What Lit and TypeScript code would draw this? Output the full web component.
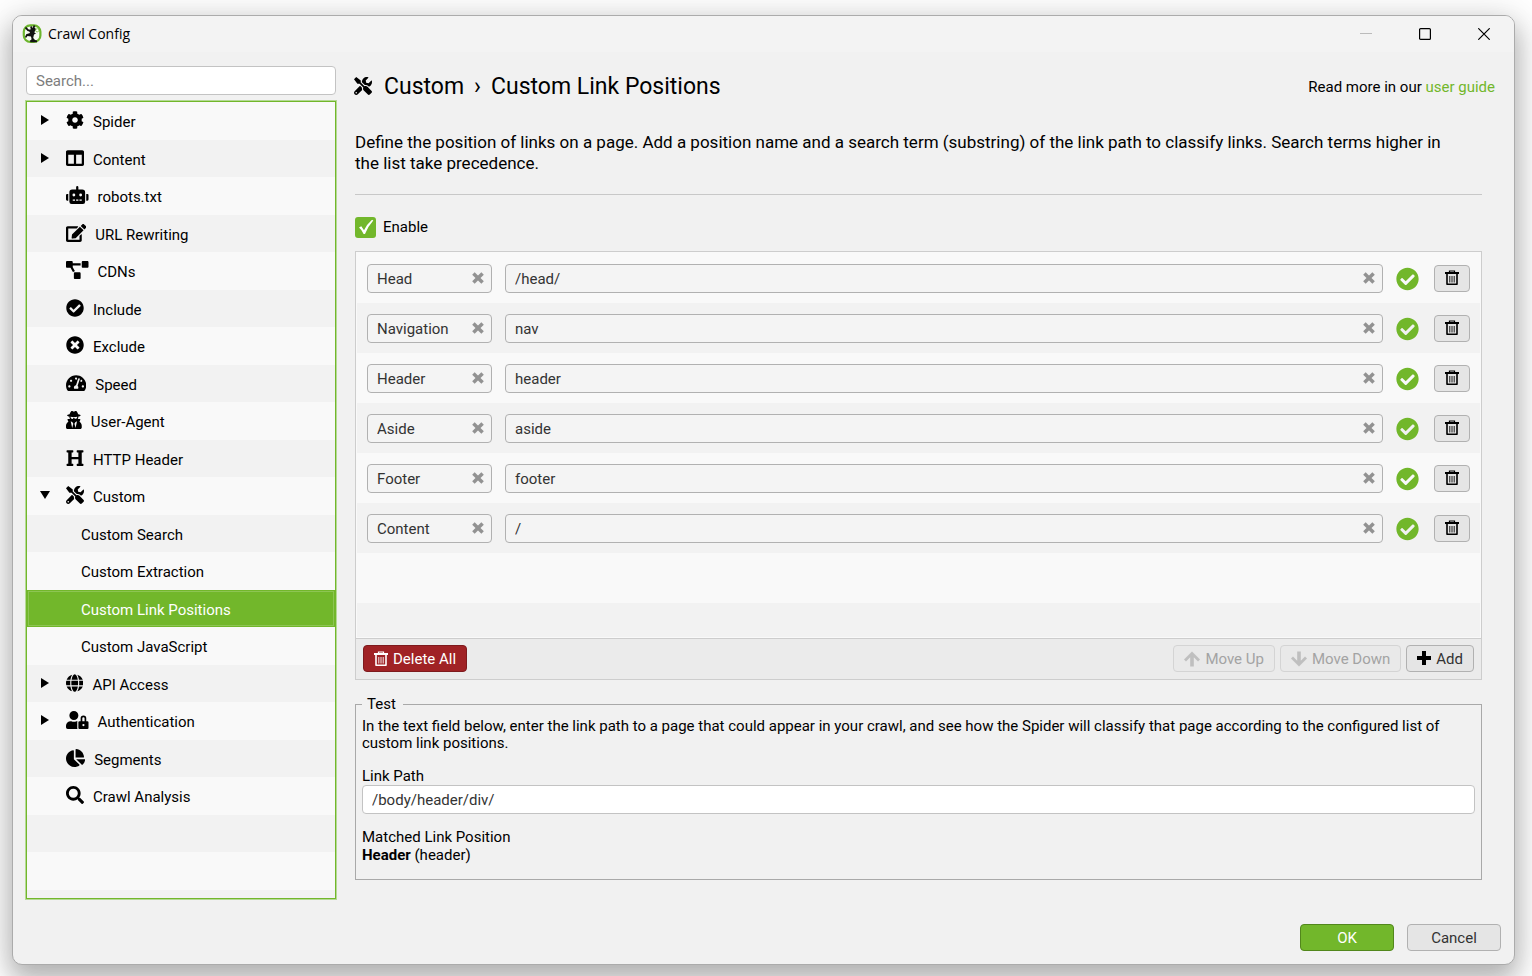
import { LitElement, html, css, svg, nothing } from "lit";
import { customElement, state } from "lit/decorators.js";
import { classMap } from "lit/directives/class-map.js";
import { live } from "lit/directives/live.js";

type Glyph = { w: number; d: string };

const GLYPHS: Record<string, Glyph> = {
  cog: { w: 512, d: "M487.4 315.7l-42.6-24.6c4.3-23.2 4.3-47 0-70.2l42.6-24.6c4.9-2.8 7.1-8.6 5.5-14-11.1-35.6-30-67.8-54.7-94.6-3.8-4.1-10-5.1-14.8-2.3L380.8 110c-17.9-15.4-38.5-27.3-60.8-35.1V25.8c0-5.6-3.9-10.5-9.4-11.7-36.7-8.2-74.3-7.8-109.2 0-5.5 1.2-9.4 6.1-9.4 11.7V75c-22.2 7.9-42.8 19.8-60.8 35.1L88.7 85.5c-4.9-2.8-11-1.9-14.8 2.3-24.7 26.7-43.6 58.9-54.7 94.6-1.7 5.4.6 11.2 5.5 14L67.3 221c-4.3 23.2-4.3 47 0 70.2l-42.6 24.6c-4.9 2.8-7.1 8.6-5.5 14 11.1 35.6 30 67.8 54.7 94.6 3.8 4.1 10 5.1 14.8 2.3l42.6-24.6c17.9 15.4 38.5 27.3 60.8 35.1v49.2c0 5.6 3.9 10.5 9.4 11.7 36.7 8.2 74.3 7.8 109.2 0 5.5-1.2 9.4-6.1 9.4-11.7v-49.2c22.2-7.9 42.8-19.8 60.8-35.1l42.6 24.6c4.9 2.8 11 1.9 14.8-2.3 24.7-26.7 43.6-58.9 54.7-94.6 1.5-5.5-.7-11.3-5.6-14.1zM256 336c-44.1 0-80-35.9-80-80s35.9-80 80-80 80 35.9 80 80-35.9 80-80 80z" },
  columns: { w: 512, d: "M464 32H48C21.49 32 0 53.49 0 80v352c0 26.51 21.49 48 48 48h416c26.51 0 48-21.49 48-48V80c0-26.51-21.49-48-48-48zM224 416H64V160h160v256zm224 0H288V160h160v256z" },
  robot: { w: 640, d: "M32,224H64V416H32A31.96166,31.96166,0,0,1,0,384V256A31.96166,31.96166,0,0,1,32,224Zm512-48V448a64.06328,64.06328,0,0,1-64,64H160a64.06328,64.06328,0,0,1-64-64V176a79.974,79.974,0,0,1,80-80H288V32a32,32,0,0,1,64,0V96H464A79.974,79.974,0,0,1,544,176ZM264,256a40,40,0,1,0-40,40A39.997,39.997,0,0,0,264,256Zm-8,128H192v32h64Zm96,0H288v32h64ZM456,256a40,40,0,1,0-40,40A39.997,39.997,0,0,0,456,256Zm-8,128H384v32h64ZM640,256V384a31.96166,31.96166,0,0,1-32,32H576V224h32A31.96166,31.96166,0,0,1,640,256Z" },
  edit: { w: 576, d: "M402.6 83.2l90.2 90.2c3.8 3.8 3.8 10 0 13.8L274.4 405.6l-92.8 10.3c-12.4 1.4-22.9-9.1-21.5-21.5l10.3-92.8L388.8 83.2c3.8-3.8 10-3.8 13.8 0zm162-22.9l-48.8-48.8c-15.2-15.2-39.9-15.2-55.2 0l-35.4 35.4c-3.8 3.8-3.8 10 0 13.8l90.2 90.2c3.8 3.8 10 3.8 13.8 0l35.4-35.4c15.2-15.3 15.2-40 0-55.2zM384 346.2V448H64V128h229.8c3.2 0 6.2-1.3 8.5-3.5l40-40c7.6-7.6 2.2-20.5-8.5-20.5H48C21.5 64 0 85.5 0 112v352c0 26.5 21.5 48 48 48h352c26.5 0 48-21.5 48-48V306.2c0-10.7-12.9-16-20.5-8.5l-40 40c-2.2 2.3-3.5 5.3-3.5 8.5z" },
  diagram: { w: 640, d: "M384 320H256c-17.67 0-32 14.33-32 32v128c0 17.67 14.33 32 32 32h128c17.67 0 32-14.33 32-32V352c0-17.67-14.33-32-32-32zM192 32c0-17.67-14.33-32-32-32H32C14.33 0 0 14.33 0 32v128c0 17.67 14.33 32 32 32h95.72l73.16 128.04C211.98 300.98 232.4 288 256 288h.28L192 175.51V128h224V64H192V32zM608 0H480c-17.67 0-32 14.33-32 32v128c0 17.67 14.33 32 32 32h128c17.67 0 32-14.33 32-32V32c0-17.67-14.33-32-32-32z" },
  check: { w: 512, d: "M504 256c0 136.967-111.033 248-248 248S8 392.967 8 256 119.033 8 256 8s248 111.033 248 248zM227.314 387.314l184-184c6.248-6.248 6.248-16.379 0-22.627l-22.627-22.627c-6.248-6.249-16.379-6.249-22.628 0L216 308.118l-70.059-70.059c-6.248-6.248-16.379-6.248-22.628 0l-22.627 22.627c-6.248 6.248-6.248 16.379 0 22.627l104 104c6.249 6.249 16.379 6.249 22.628.001z" },
  cross: { w: 512, d: "M256 8C119 8 8 119 8 256s111 248 248 248 248-111 248-248S393 8 256 8zm121.6 313.1c4.7 4.7 4.7 12.3 0 17L338 377.6c-4.7 4.7-12.3 4.7-17 0L256 312l-65.1 65.6c-4.7 4.7-12.3 4.7-17 0L134.4 338c-4.7-4.7-4.7-12.3 0-17l65.6-65-65.6-65.1c-4.7-4.7-4.7-12.3 0-17l39.6-39.6c4.7-4.7 12.3-4.7 17 0l65 65.7 65.1-65.6c4.7-4.7 12.3-4.7 17 0l39.6 39.6c4.7 4.7 4.7 12.3 0 17L312 256l65.6 65.1z" },
  gauge: { w: 576, d: "M288 32C128.94 32 0 160.94 0 320c0 52.8 14.25 102.26 39.06 144.8 5.61 9.62 16.3 15.2 27.44 15.2h443c11.14 0 21.83-5.58 27.44-15.2C561.75 422.26 576 372.8 576 320c0-159.06-128.94-288-288-288zm0 64c14.71 0 26.58 10.13 30.32 23.65-1.11 2.26-2.64 4.23-3.45 6.67l-9.22 27.67c-5.13 3.49-10.97 6.01-17.64 6.01-17.67 0-32-14.33-32-32S270.33 96 288 96zM96 384c-17.67 0-32-14.33-32-32s14.33-32 32-32 32 14.33 32 32-14.33 32-32 32zm48-160c-17.67 0-32-14.33-32-32s14.33-32 32-32 32 14.33 32 32-14.33 32-32 32zm246.77-72.41l-61.33 184C343.13 347.33 352 364.54 352 384c0 11.72-3.38 22.55-8.88 32H232.88c-5.5-9.45-8.88-20.28-8.88-32 0-33.94 26.5-61.43 59.9-63.59l61.34-184.01c4.17-12.56 17.73-19.45 30.36-15.17 12.57 4.19 19.35 17.79 15.17 30.36zm14.66 57.2l15.52-46.55c3.47-1.29 7.13-2.23 11.05-2.23 17.67 0 32 14.33 32 32s-14.33 32-32 32c-11.38-.01-20.89-6.28-26.57-15.22zM480 384c-17.67 0-32-14.33-32-32s14.33-32 32-32 32 14.33 32 32-14.33 32-32 32z" },
  agent: { w: 448, d: "M383.9 308.3l23.9-62.6c4-10.5-3.7-21.7-15-21.7h-58.5c11-18.9 17.8-40.6 17.8-64v-.3c39.2-7.8 64-19.1 64-31.7 0-13.3-27.3-25.1-70.1-33-9.2-32.8-27-65.8-40.6-82.8-9.5-11.9-25.9-15.6-39.5-8.8l-27.6 13.8c-9 4.5-19.6 4.5-28.6 0L182.1 3.4c-13.6-6.8-30-3.1-39.5 8.8-13.5 17-31.4 50-40.6 82.8-42.7 7.9-70 19.7-70 33 0 12.6 24.8 23.9 64 31.7v.3c0 23.4 6.8 45.1 17.8 64H56.3c-11.5 0-19.2 11.7-14.7 22.3l25.8 60.2C27.3 329.8 0 372.7 0 422.4v44.8C0 491.9 20.1 512 44.8 512h358.4c24.7 0 44.8-20.1 44.8-44.8v-44.8c0-48.4-25.8-90.4-64.1-114.1zM176 480l-41.6-192 49.6 32 24 40-32 120zm96 0l-32-120 24-40 49.6-32L272 480zm41.7-298.5c-3.9 11.9-7 24.6-16.5 33.4-10.1 9.3-48 22.4-64-25-2.8-8.4-15.4-8.4-18.3 0-17 50.2-56 32.4-64 25-9.5-8.8-12.7-21.5-16.5-33.4-.8-2.5-6.3-5.7-6.3-5.8v-10.8c28.3 3.6 61 5.8 96 5.8s67.7-2.1 96-5.8v10.8c-.1.1-5.6 3.2-6.4 5.8z" },
  heading: { w: 512, d: "M448 96v320h32a16 16 0 0 1 16 16v32a16 16 0 0 1-16 16H320a16 16 0 0 1-16-16v-32a16 16 0 0 1 16-16h32V288H160v128h32a16 16 0 0 1 16 16v32a16 16 0 0 1-16 16H32a16 16 0 0 1-16-16v-32a16 16 0 0 1 16-16h32V96H32a16 16 0 0 1-16-16V48a16 16 0 0 1 16-16h160a16 16 0 0 1 16 16v32a16 16 0 0 1-16 16h-32v128h192V96h-32a16 16 0 0 1-16-16V48a16 16 0 0 1 16-16h160a16 16 0 0 1 16 16v32a16 16 0 0 1-16 16z" },
  tools: { w: 512, d: "M501.1 395.7L384 278.6c-23.1-23.1-57.6-27.6-85.4-13.9L192 158.1V96L64 0 0 64l96 128h62.1l106.6 106.6c-13.6 27.8-9.2 62.3 13.9 85.4l117.1 117.1c14.6 14.6 38.2 14.6 52.7 0l52.7-52.7c14.5-14.6 14.5-38.2 0-52.7zM331.7 225c28.3 0 54.9 11 74.9 31l19.4 19.4c15.8-6.9 30.8-16.5 43.8-29.5 37.1-37.1 49.7-89.3 37.9-136.7-2.2-9-13.5-12.1-20.1-5.5l-74.4 74.4-67.9-11.3L334 98.9l74.4-74.4c6.6-6.6 3.4-17.9-5.7-20.2-47.4-11.7-99.6.9-136.6 37.9-28.5 28.5-41.9 66.1-41.2 103.6l82.1 82.1c8.1-1.9 16.5-2.9 24.7-2.9zm-103.9 82l-56.7-56.7L18.7 402.8c-25 25-25 65.5 0 90.5s65.5 25 90.5 0l123.6-123.6c-7.6-19.9-9.9-41.6-5-62.7zM64 472c-13.2 0-24-10.8-24-24 0-13.3 10.7-24 24-24s24 10.7 24 24c0 13.2-10.7 24-24 24z" },
  globe: { w: 496, d: "M336.5 160C322 70.7 287.8 8 248 8s-74 62.7-88.5 152h177zM152 256c0 22.2 1.2 43.5 3.3 64h185.3c2.1-20.5 3.3-41.8 3.3-64s-1.2-43.5-3.3-64H155.3c-2.1 20.5-3.3 41.8-3.3 64zm324.7-96c-28.6-67.9-86.5-120.4-158-141.6 24.4 33.8 41.2 84.7 50 141.6h108zM177.2 18.4C105.8 39.6 47.8 92.1 19.3 160h108c8.7-56.9 25.5-107.8 49.9-141.6zM487.4 192H372.7c2.1 21 3.3 42.5 3.3 64s-1.2 43-3.3 64h114.6c5.5-20.5 8.6-41.8 8.6-64s-3.1-43.5-8.5-64zM120 256c0-21.5 1.2-43 3.3-64H8.6C3.2 212.5 0 233.8 0 256s3.2 43.5 8.6 64h114.6c-2-21-3.2-42.5-3.2-64zm39.5 96c14.5 89.3 48.7 152 88.5 152s74-62.7 88.5-152h-177zm159.3 141.6c71.4-21.2 129.4-73.7 158-141.6h-108c-8.8 56.9-25.6 107.8-50 141.6zM19.3 352c28.6 67.9 86.5 120.4 158 141.6-24.4-33.8-41.2-84.7-50-141.6h-108z" },
  userLock: { w: 640, d: "M224 256A128 128 0 1 0 96 128a128 128 0 0 0 128 128zm96 64a63.08 63.08 0 0 1 8.1-30.5c-4.8-.5-9.5-1.5-14.5-1.5h-16.7a174.08 174.08 0 0 1-145.8 0h-16.7A134.43 134.43 0 0 0 0 422.4V464a48 48 0 0 0 48 48h280.9a63.54 63.54 0 0 1-8.9-32zm288-32h-32v-80a80 80 0 0 0-160 0v80h-32a32 32 0 0 0-32 32v160a32 32 0 0 0 32 32h224a32 32 0 0 0 32-32V320a32 32 0 0 0-32-32zM496 432a32 32 0 1 1 32-32 32 32 0 0 1-32 32zm32-144h-64v-80a32 32 0 0 1 64 0z" },
  pie: { w: 544, d: "M527.79 288H290.5l158.03 158.03c6.04 6.04 15.98 6.53 22.19.68 38.7-36.46 65.32-85.61 73.13-140.86 1.34-9.46-6.51-17.85-16.06-17.85zm-15.83-64.8C503.72 103.74 408.26 8.28 288.8.04 279.68-.59 272 7.1 272 16.24V240h223.77c9.14 0 16.82-7.68 16.19-16.8zM224 288V50.71c0-9.55-8.39-17.4-17.84-16.06C86.99 51.49-4.1 155.6.14 280.37 4.5 408.51 114.83 513.59 243.03 511.98c50.4-.63 96.97-16.87 135.26-44.03 7.9-5.6 8.42-17.23 1.57-24.08L224 288z" },
  search: { w: 512, d: "M505 442.7L405.3 343c-4.5-4.5-10.6-7-17-7H372c27.6-35.3 44-79.7 44-128C416 93.1 322.9 0 208 0S0 93.1 0 208s93.1 208 208 208c48.3 0 92.7-16.4 128-44v16.3c0 6.4 2.5 12.5 7 17l99.7 99.7c9.4 9.4 24.6 9.4 33.9 0l28.3-28.3c9.4-9.4 9.4-24.6.1-34zM208 336c-70.7 0-128-57.2-128-128 0-70.7 57.2-128 128-128 70.7 0 128 57.2 128 128 0 70.7-57.2 128-128 128z" },
};

const glyph = (name: string, cls = "glyph") => html`
  <svg class=${cls} viewBox="0 0 ${GLYPHS[name].w} 512" aria-hidden="true">
    ${svg`<path d=${GLYPHS[name].d}></path>`}
  </svg>
`;

const trash = html`
  <svg class="trash" viewBox="0 0 14 16" aria-hidden="true">
    <path d="M4.5 2.5V1h5v1.5" fill="none" stroke="currentColor" stroke-width="1.2" />
    <path d="M0 2h14v2H0z" fill="currentColor" />
    <path d="M2 4v10.2h10V4" fill="none" stroke="currentColor" stroke-width="1.6" stroke-linejoin="round" />
    <path d="M4.8 6v6.500M7 6v6.500M9.200 6v6.500" fill="none" stroke="currentColor" stroke-width=".9" />
  </svg>
`;

type Item = { label: string; icon?: string; fold?: "open" | "closed"; child?: boolean };

const ITEMS: Item[] = [
  { label: "Spider", icon: "cog", fold: "closed" },
  { label: "Content", icon: "columns", fold: "closed" },
  { label: "robots.txt", icon: "robot" },
  { label: "URL Rewriting", icon: "edit" },
  { label: "CDNs", icon: "diagram" },
  { label: "Include", icon: "check" },
  { label: "Exclude", icon: "cross" },
  { label: "Speed", icon: "gauge" },
  { label: "User-Agent", icon: "agent" },
  { label: "HTTP Header", icon: "heading" },
  { label: "Custom", icon: "tools", fold: "open" },
  { label: "Custom Search", child: true },
  { label: "Custom Extraction", child: true },
  { label: "Custom Link Positions", child: true },
  { label: "Custom JavaScript", child: true },
  { label: "API Access", icon: "globe", fold: "closed" },
  { label: "Authentication", icon: "userLock", fold: "closed" },
  { label: "Segments", icon: "pie" },
  { label: "Crawl Analysis", icon: "search" },
];

@customElement("config-tree")
export class ConfigTree extends LitElement {
  @state() private selected = "Custom Link Positions";

  static styles = css`
    :host {
      display: flex;
      flex-direction: column;
      gap: 6px;
      font: 15px/18px Roboto, sans-serif;
      color: #000;
    }
    .search {
      box-sizing: border-box;
      width: 100%;
      height: 29px;
      padding: 0 9px;
      border: 1px solid #c3c3c3;
      border-radius: 4px;
      background: #fff;
      font: inherit;
      outline: none;
    }
    .search::placeholder {
      color: #7d7d7d;
      opacity: 1;
    }
    .tree {
      flex: 1;
      display: flex;
      flex-direction: column;
      margin: 0;
      padding: 0;
      overflow: hidden;
      list-style: none;
      border: 1px solid #72b72b;
      box-shadow: 0 0 0 1px #b5d995;
      background: #f2f2f2;
    }
    .item {
      flex: none;
      height: 37px;
      background: #f2f2f2;
    }
    .item:nth-child(odd) {
      height: 38px;
      background: #f9f9f9;
    }
    .item.last {
      height: 7px;
    }
    .row {
      box-sizing: border-box;
      display: flex;
      align-items: center;
      width: 100%;
      height: 100%;
      padding: 0 13px;
      border: 0;
      background: none;
      font: inherit;
      color: inherit;
      text-align: left;
    }
    .row.child {
      padding-left: 54px;
    }
    .row.selected {
      background: #72b72b;
      color: #fff;
      box-shadow: inset 0 0 0 1px #72b72b, inset 0 0 0 2px #8dc553;
    }
    .name {
      padding-top: 2px;
    }
    .arrow {
      width: 10px;
      height: 18px;
      margin-right: 16px;
      padding-bottom: 2px;
    }
    .glyph {
      height: 18px;
      margin-right: 9px;
      padding-bottom: 2px;
    }
  `;

  private arrow(fold?: string) {
    return html`
      <svg class="arrow" viewBox="0 0 10 18" aria-hidden="true">
        ${fold === "closed" ? svg`<path d="M1 4v10l8-5z"></path>` : nothing}
        ${fold === "open" ? svg`<path d="M0 5h10l-5 8z"></path>` : nothing}
      </svg>
    `;
  }

  render() {
    return html`
      <input class="search" type="text" placeholder="Search..." aria-label="Search" />
      <ul class="tree">
        ${ITEMS.map((item) => html`
          <li class="item">
            <button
              class=${classMap({ row: true, child: !!item.child, selected: item.label === this.selected })}
              @click=${() => (this.selected = item.label)}
            >
              ${item.child ? nothing : this.arrow(item.fold)}
              ${item.icon ? glyph(item.icon) : nothing}
              <span class="name">${item.label}</span>
            </button>
          </li>
        `)}
        <li class="item" aria-hidden="true"></li>
        <li class="item" aria-hidden="true"></li>
        <li class="item last" aria-hidden="true"></li>
      </ul>
    `;
  }
}

@customElement("clear-field")
export class ClearField extends LitElement {
  static properties = { value: {}, label: {} };
  declare value: string;
  declare label: string;

  static styles = css`
    :host {
      display: block;
    }
    .box {
      box-sizing: border-box;
      display: flex;
      align-items: center;
      height: 29px;
      padding: 0 7px 0 9px;
      border: 1px solid #b1b1b1;
      border-radius: 4px;
      background: #f4f4f4;
    }
    .text {
      flex: 1;
      min-width: 0;
      padding: 1px 0 0;
      border: 0;
      outline: none;
      background: none;
      font: 15px/18px Roboto, sans-serif;
      color: #333;
    }
    .clear {
      display: flex;
      padding: 0;
      border: 0;
      background: none;
    }
    .cross {
      width: 12px;
      height: 12px;
      stroke: #929292;
      stroke-width: 3.2;
    }
  `;

  render() {
    return html`
      <div class="box">
        <input
          class="text"
          type="text"
          aria-label=${this.label}
          .value=${live(this.value)}
          @input=${(e: InputEvent) => (this.value = (e.target as HTMLInputElement).value)}
        />
        <button class="clear" aria-label="Clear" @click=${() => (this.value = "")}>
          <svg class="cross" viewBox="0 0 11 11"><path d="M1.3 1.3l8.4 8.4M9.7 1.3l-8.4 8.4" /></svg>
        </button>
      </div>
    `;
  }
}

@customElement("app-root")
export class AppRoot extends LitElement {
  @state() private positions = [
    { name: "Head", term: "/head/" },
    { name: "Navigation", term: "nav" },
    { name: "Header", term: "header" },
    { name: "Aside", term: "aside" },
    { name: "Footer", term: "footer" },
    { name: "Content", term: "/" },
  ];

  static styles = css`
    :host {
      box-sizing: border-box;
      display: flex;
      min-height: 100vh;
      padding: 15px 17px 11px 12px;
      overflow: hidden;
      background: #fff;
      font: 15px/18px Roboto, sans-serif;
      color: #000;
    }
    .window {
      flex: 1;
      display: flex;
      flex-direction: column;
      border: 1px solid #ababab;
      border-radius: 10px;
      background: #f1f1f1;
      box-shadow: 0 14px 24px 2px rgba(0, 0, 0, 0.22), 0 4px 36px 4px rgba(0, 0, 0, 0.14);
      overflow: hidden;
    }
    .titlebar {
      display: flex;
      align-items: center;
      height: 36px;
      padding: 0 18px 0 9px;
      background: #f3f3f3;
    }
    .logo {
      width: 20px;
      height: 20px;
      margin-right: 6px;
    }
    .title {
      flex: 1;
      margin: 0;
      font: 14px/20px "Open Sans", sans-serif;
    }
    .controls {
      display: flex;
      gap: 35px;
    }
    .control {
      display: flex;
      padding: 6px;
      border: 0;
      background: none;
      color: #000;
    }
    .control:disabled {
      color: #bbb;
    }
    .mark {
      width: 12px;
      height: 12px;
      fill: none;
      stroke: currentColor;
    }
    .body {
      flex: 1;
      display: grid;
      grid-template-columns: 310px minmax(0, 1fr);
      column-gap: 18px;
      padding: 14px 19px 0 13px;
    }
    .main {
      display: flex;
      flex-direction: column;
    }
    .head {
      display: flex;
      align-items: center;
      justify-content: space-between;
      height: 42px;
    }
    .crumbs {
      display: flex;
      align-items: center;
      margin: 0;
      font: 23px/28px Roboto, sans-serif;
    }
    .tools {
      height: 18px;
      margin-right: 12px;
      padding-bottom: 2px;
    }
    .chevron {
      margin: 0 10px;
    }
    .link {
      color: #72b72b;
      text-decoration: none;
    }
    .content {
      display: flex;
      flex-direction: column;
      padding: 24px 13px 0 1px;
    }
    .intro {
      margin: 0 0 22px;
      padding: 0 20px 20px 0;
      border-bottom: 1px solid #c8c8c8;
      font-size: 17px;
      line-height: 21px;
    }
    .enable {
      display: flex;
      align-items: center;
      align-self: flex-start;
      gap: 7px;
      margin-bottom: 13px;
      line-height: 21px;
    }
    .tick {
      display: grid;
      width: 21px;
      height: 21px;
    }
    .tick > * {
      grid-area: 1 / 1;
    }
    .box {
      appearance: none;
      width: 21px;
      height: 21px;
      margin: 0;
      border-radius: 3px;
      background: #fff;
    }
    .box:checked {
      background: #72b72b;
    }
    .tickmark {
      width: 21px;
      height: 21px;
      pointer-events: none;
      fill: #fff;
    }
    .panel {
      border: 1px solid #cdcdcd;
    }
    .rows {
      margin: 0;
      padding: 0;
      list-style: none;
      border: 1px solid #f9f9f9;
    }
    .entry {
      box-sizing: border-box;
      display: grid;
      grid-template-columns: 125px minmax(0, 1fr) 24px 50px;
      align-items: center;
      height: 50px;
      padding: 0 10px;
      background: #f2f2f2;
    }
    .entry:nth-child(odd) {
      background: #f9f9f9;
    }
    .entry.short {
      height: 34px;
    }
    .term {
      margin: 0 13px;
    }
    .ok {
      width: 23px;
      height: 24px;
      padding-top: 1px;
      fill: #72b72b;
    }
    .entry .btn {
      margin-left: 14px;
    }
    .btn {
      box-sizing: border-box;
      display: flex;
      align-items: center;
      justify-content: center;
      gap: 5px;
      height: 27px;
      padding: 0 10px;
      border: 1px solid #b1b1b1;
      border-radius: 4px;
      background: #e5e5e5;
      font: inherit;
      color: #333;
    }
    .btn.bin {
      width: 36px;
      padding: 0;
      color: #000;
    }
    .btn.danger {
      margin-right: auto;
      border-color: #7e1a1d;
      background: #a02225;
      color: #fff;
    }
    .btn:disabled {
      border-color: #d4d4d4;
      background: #e9e9e9;
      color: #a3a3a3;
    }
    .btn.wide {
      width: 94px;
    }
    .btn.primary {
      border-color: #52871c;
      background: #72b72b;
      color: #fff;
    }
    .trash {
      width: 14px;
      height: 16px;
    }
    .sign {
      width: 16px;
      height: 16px;
      fill: #000;
    }
    .sign.plus {
      width: 14px;
    }
    .btn:disabled .sign {
      fill: #bfbfbf;
    }
    .toolbar {
      display: flex;
      gap: 5px;
      padding: 6px 7px 7px;
      border-top: 1px solid #cdcdcd;
      background: #ebebeb;
    }
    .test {
      min-width: 0;
      margin: 15px 0 0;
      padding: 5px 6px 15px;
      border: 1px solid #a9a9a9;
      line-height: 18px;
    }
    .legend {
      padding: 0 7px 0 5px;
    }
    .note {
      margin: 0 0 15px;
      line-height: 17px;
    }
    .label {
      display: block;
    }
    .path {
      box-sizing: border-box;
      display: block;
      width: 100%;
      height: 29px;
      margin-bottom: 14px;
      padding: 0 9px;
      border: 1px solid #c3c3c3;
      border-radius: 4px;
      outline: none;
      background: #fff;
      font: inherit;
      color: #333;
    }
    .result {
      margin: 0;
    }
    .footer {
      display: flex;
      justify-content: flex-end;
      gap: 13px;
      padding: 25px 13px 13px;
    }
  `;

  private remove(index: number) {
    this.positions = this.positions.filter((_, i) => i !== index);
  }

  render() {
    return html`
      <div class="window">
        <header class="titlebar">
          <svg class="logo" viewBox="0 0 20 20" aria-hidden="true">
            <rect x="1.8" y="1.3" width="16.6" height="16.6" rx="6.5" fill="#f6faf1" stroke="#6cb52d" stroke-width="2.2" />
            <path d="M3.500 3.500L6 6.200 8.500 7M9 2.500l.8 3M12.500 1.500L10.500 6" fill="none" stroke="#111" stroke-width="1.8" />
            <path d="M7 6l6-2.500 1 2.200-1.800 2.500L14 9.500l-2 1-.8 3.500 1.800 2 2 .6v1.600H8.500l-.6-1.500 1.700-1.500L9 12.500 5.500 12l-1.500 2-1-1 1.200-2.800L8 9z" fill="#111" />
            <circle cx="15.200" cy="6.300" r="1.600" fill="#fff" stroke="#6cb52d" stroke-width=".7" />
          </svg>
          <h1 class="title">Crawl Config</h1>
          <div class="controls">
            <button class="control" aria-label="Minimize" disabled>
              <svg class="mark" viewBox="0 0 12 12"><path d="M0 5.5h12" /></svg>
            </button>
            <button class="control" aria-label="Maximize">
              <svg class="mark" viewBox="0 0 12 12"><rect x=".6" y=".6" width="10.8" height="10.8" rx="1" stroke-width="1.2" /></svg>
            </button>
            <button class="control" aria-label="Close">
              <svg class="mark" viewBox="0 0 12 12"><path d="M.3.3l11.4 11.4M11.7.3L.3 11.7" stroke-width="1.2" /></svg>
            </button>
          </div>
        </header>
        <div class="body">
          <config-tree></config-tree>
          <main class="main">
            <div class="head">
              <h2 class="crumbs">
                ${glyph("tools", "tools")}<span>Custom</span><span class="chevron">›</span><span>Custom Link Positions</span>
              </h2>
              <span>Read more in our <a class="link" href="#">user guide</a></span>
            </div>
            <div class="content">
              <p class="intro">
                Define the position of links on a page. Add a position name and a search term (substring) of the link path to classify links. Search terms higher in the list take precedence.
              </p>
              <label class="enable">
                <span class="tick">
                  <input class="box" type="checkbox" checked />
                  <svg class="tickmark" viewBox="0 0 21 21"><path d="M4 10.500L6.300 9.300 9 13.200Q12 7 17 2.700L18.300 3.600Q13 9.500 10 17L8.600 17Q7 13 4 10.500z" /></svg>
                </span>
                Enable
              </label>
              <section class="panel">
                <ul class="rows">
                  ${this.positions.map((p, i) => html`
                    <li class="entry">
                      <clear-field .value=${p.name} .label=${"Position name"}></clear-field>
                      <clear-field class="term" .value=${p.term} .label=${"Search term"}></clear-field>
                      ${glyph("check", "ok")}
                      <button class="btn bin" aria-label="Delete" @click=${() => this.remove(i)}>${trash}</button>
                    </li>
                  `)}
                  <li class="entry" aria-hidden="true"></li>
                  <li class="entry short" aria-hidden="true"></li>
                </ul>
                <div class="toolbar">
                  <button class="btn danger" @click=${() => (this.positions = [])}>${trash}Delete All</button>
                  <button class="btn" disabled>
                    <svg class="sign" viewBox="0 0 16 16"><path d="M8 .5l8 8-2 2-4.200-4.200V15.500H6.200V6.300L2 10.500l-2-2z" /></svg>Move Up
                  </button>
                  <button class="btn" disabled>
                    <svg class="sign" viewBox="0 0 16 16"><path d="M8 15.500l-8-8 2-2 4.200 4.200V.5h3.600v9.200L14 5.500l2 2z" /></svg>Move Down
                  </button>
                  <button class="btn" @click=${() => (this.positions = [...this.positions, { name: "", term: "" }])}>
                    <svg class="sign plus" viewBox="0 0 14 16"><path d="M5 0h4v5h5v4H9v5H5V9H0V5h5z" /></svg>Add
                  </button>
                </div>
              </section>
              <fieldset class="test">
                <legend class="legend">Test</legend>
                <p class="note">
                  In the text field below, enter the link path to a page that could appear in your crawl, and see how the Spider will classify that page according to the configured list of custom link positions.
                </p>
                <label class="label" for="path">Link Path</label>
                <input class="path" id="path" type="text" value="/body/header/div/" />
                <p class="result">Matched Link Position<br /><b>Header</b> (header)</p>
              </fieldset>
            </div>
          </main>
        </div>
        <footer class="footer">
          <button class="btn wide primary">OK</button>
          <button class="btn wide">Cancel</button>
        </footer>
      </div>
    `;
  }
}
